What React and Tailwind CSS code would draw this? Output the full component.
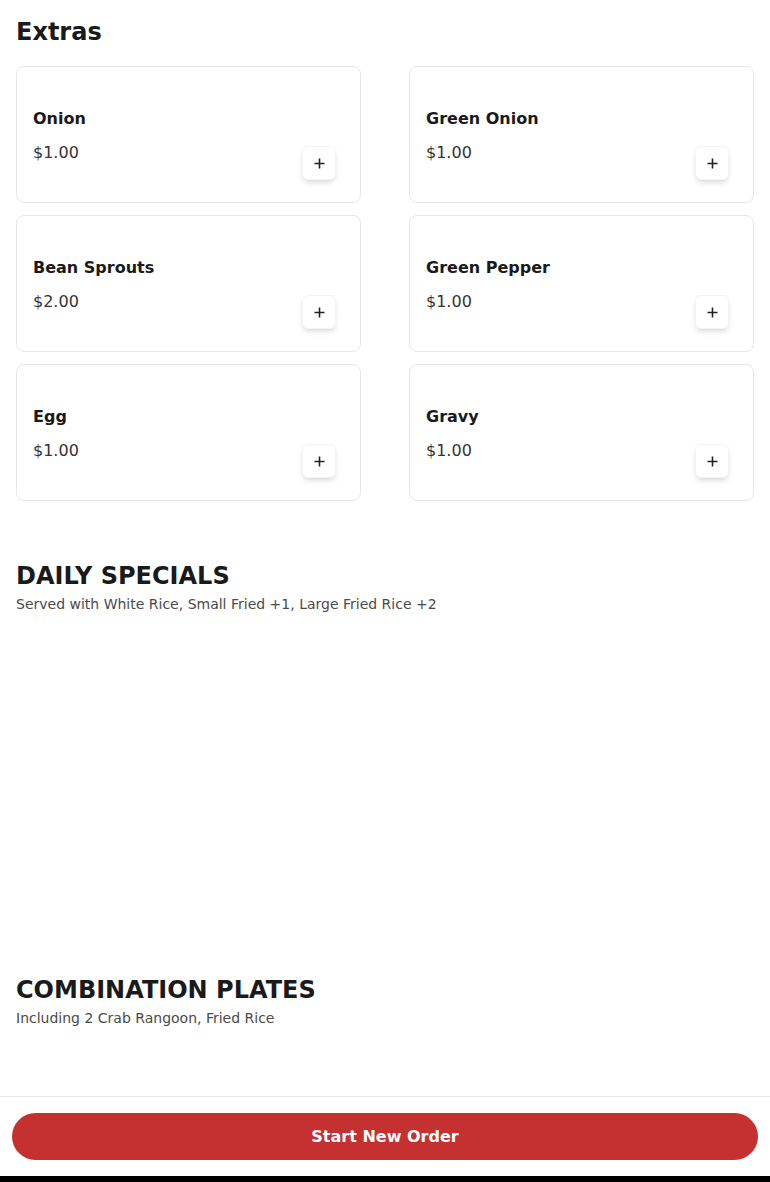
import React from 'react';

const extras = [
  { name: 'Onion', price: '$1.00' },
  { name: 'Green Onion', price: '$1.00' },
  { name: 'Bean Sprouts', price: '$2.00' },
  { name: 'Green Pepper', price: '$1.00' },
  { name: 'Egg', price: '$1.00' },
  { name: 'Gravy', price: '$1.00' },
];

const PlusIcon = () => (
  <svg width="11" height="11" viewBox="0 0 11 11" fill="none">
    <path d="M5.5 0.5v10M0.5 5.5h10" stroke="#222" strokeWidth="1.6" />
  </svg>
);

const ItemCard = ({ name, price }) => (
  <div className="border border-gray-200 rounded-lg bg-white pt-[40px] pl-4 pr-6 pb-[22px]">
    <h3 className="text-base leading-6 font-bold text-[#1a1a1a]">{name}</h3>
    <div className="flex justify-between items-start mt-[10px]">
      <span className="text-base leading-6 text-[#333]">{price}</span>
      <button className="mt-[5px] w-[34px] h-[34px] flex items-center justify-center rounded-md border border-gray-100 bg-white shadow-md">
        <PlusIcon />
      </button>
    </div>
  </div>
);

const SectionHeader = ({ title, subtitle }) => (
  <div>
    <h2 className="text-2xl leading-8 font-bold text-[#1a1a1a]">{title}</h2>
    <p className="text-sm leading-5 text-[#4a4a4a] mt-[2px]">{subtitle}</p>
  </div>
);

export default function App() {
  return (
    <div className="min-h-screen bg-white font-['DejaVu_Sans',sans-serif]">
      <div className="px-4 pt-4 pb-[120px]">
        <h2 className="text-2xl leading-8 font-bold text-[#1a1a1a]">Extras</h2>
        <div className="grid grid-cols-2 gap-x-12 gap-y-3 mt-[18px]">
          {extras.map(item => (
            <ItemCard key={item.name} {...item} />
          ))}
        </div>

        <div className="mt-[59px]">
          <SectionHeader title="DAILY SPECIALS" subtitle="Served with White Rice, Small Fried +1, Large Fried Rice +2" />
        </div>

        <div className="mt-[360px]">
          <SectionHeader title="COMBINATION PLATES" subtitle="Including 2 Crab Rangoon, Fried Rice" />
        </div>
      </div>

      {/* bottom order bar */}
      <div className="fixed bottom-0 inset-x-0 bg-white border-t border-gray-200">
        <div className="px-3 pt-4 pb-4">
          <button className="w-full h-[47px] rounded-[24px] bg-[#c53030] text-white font-bold text-base">
            Start New Order
          </button>
        </div>
        <div className="h-[6px] bg-black" />
      </div>
    </div>
  );
}
